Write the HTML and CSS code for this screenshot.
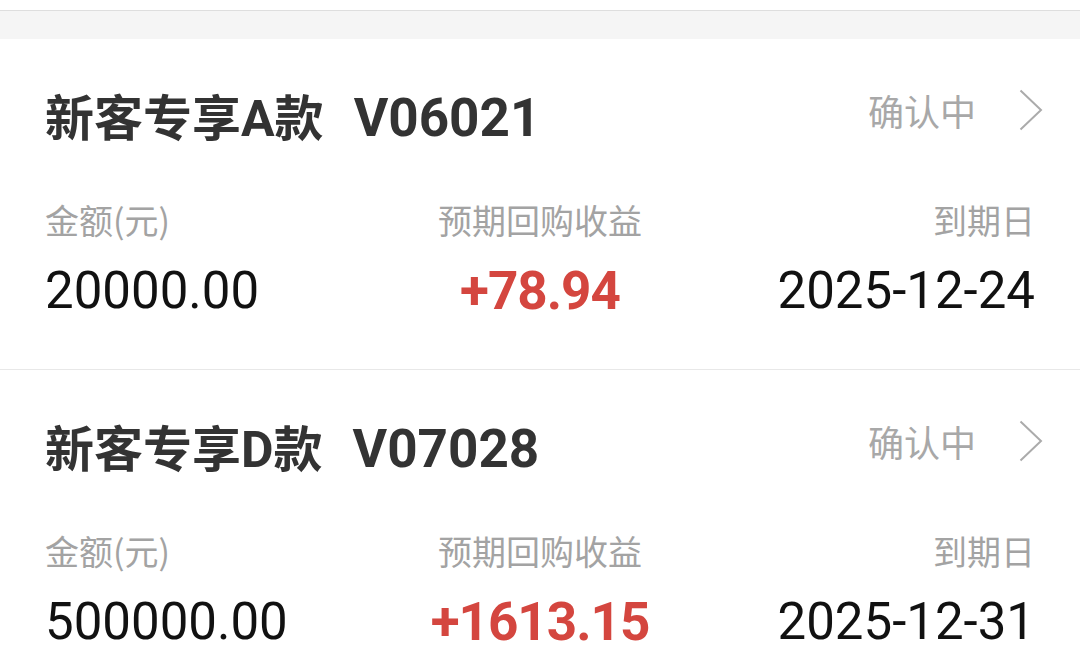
FILE: index.html
```html
<!DOCTYPE html>
<html lang="zh-CN">
<head>
  <meta charset="UTF-8" />
  <meta name="viewport" content="width=device-width, initial-scale=1.0"/>
  <title>我的订单</title>
  <link rel="stylesheet" href="styles.css">
</head>
<body>
  <div class="top-strip"></div>
  <div class="gap-band"></div>

  <!-- Order A -->
  <div class="card">
    <div class="card-head">
      <h2 class="title">新客专享<span class="latin">A</span>款<span class="latin code">V06021</span></h2>
      <div class="status">
        <span>确认中</span>
        <svg class="chevron" viewBox="0 0 24 42" width="24" height="42">
          <path d="M1.5 1.5 L22 21 L1.5 40.5" fill="none" stroke="#ababab" stroke-width="2"/>
        </svg>
      </div>
    </div>
    <div class="stats">
      <div class="label">金额(元)</div>
      <div class="label mid">预期回购收益</div>
      <div class="label end">到期日</div>
      <div class="value">20000.00</div>
      <div class="value mid gain">+78.94</div>
      <div class="value end">2025-12-24</div>
    </div>
  </div>

  <!-- Order D -->
  <div class="card">
    <div class="card-head">
      <h2 class="title">新客专享<span class="latin">D</span>款<span class="latin code">V07028</span></h2>
      <div class="status">
        <span>确认中</span>
        <svg class="chevron" viewBox="0 0 24 42" width="24" height="42">
          <path d="M1.5 1.5 L22 21 L1.5 40.5" fill="none" stroke="#ababab" stroke-width="2"/>
        </svg>
      </div>
    </div>
    <div class="stats">
      <div class="label">金额(元)</div>
      <div class="label mid">预期回购收益</div>
      <div class="label end">到期日</div>
      <div class="value">500000.00</div>
      <div class="value mid gain">+1613.15</div>
      <div class="value end">2025-12-31</div>
    </div>
  </div>
</body>
</html>
```

FILE: styles.css
```css
body {
  margin: 0;
  background: #fff;
  font-family: "Noto Sans CJK SC", "Noto Sans", sans-serif;
  color: #333;
}

.top-strip {
  height: 10px;
  background: #fff;
  border-bottom: 1px solid #dedede;
}

.gap-band {
  height: 28px;
  background: #f5f5f5;
}

.card {
  padding: 48px 45px 48px;
  border-bottom: 1px solid #e8e8e8;
}

.card-head {
  display: flex;
  justify-content: space-between;
  align-items: flex-start;
  height: 56px;
}

.title {
  margin: 0;
  font-size: 49px;
  font-weight: 700;
  line-height: 56px;
  color: #333;
  white-space: nowrap;
}

.latin {
  font-family: Roboto, "Noto Sans", sans-serif;
  font-size: 50px;
}

.code {
  margin-left: 30px;
  font-size: 53px;
}

.status {
  display: flex;
  align-items: center;
  gap: 43px;
  height: 44px;
  margin-top: 1px;
  margin-right: -8px;
  font-size: 36px;
  color: #a8a8a8;
}

.chevron {
  display: block;
}

.stats {
  display: grid;
  grid-template-columns: 1fr 1fr 1fr;
  margin-top: 55px;
}

.label {
  font-size: 34px;
  line-height: 44px;
  color: #a3a3a3;
}

.value {
  margin-top: 19px;
  font-family: Roboto, "Noto Sans", sans-serif;
  font-size: 51px;
  line-height: 60px;
  color: #111;
}

.mid {
  text-align: center;
}

.end {
  text-align: right;
}

.gain {
  font-weight: 700;
  font-size: 53px;
  letter-spacing: -1px;
  color: #d4463f;
}
```
